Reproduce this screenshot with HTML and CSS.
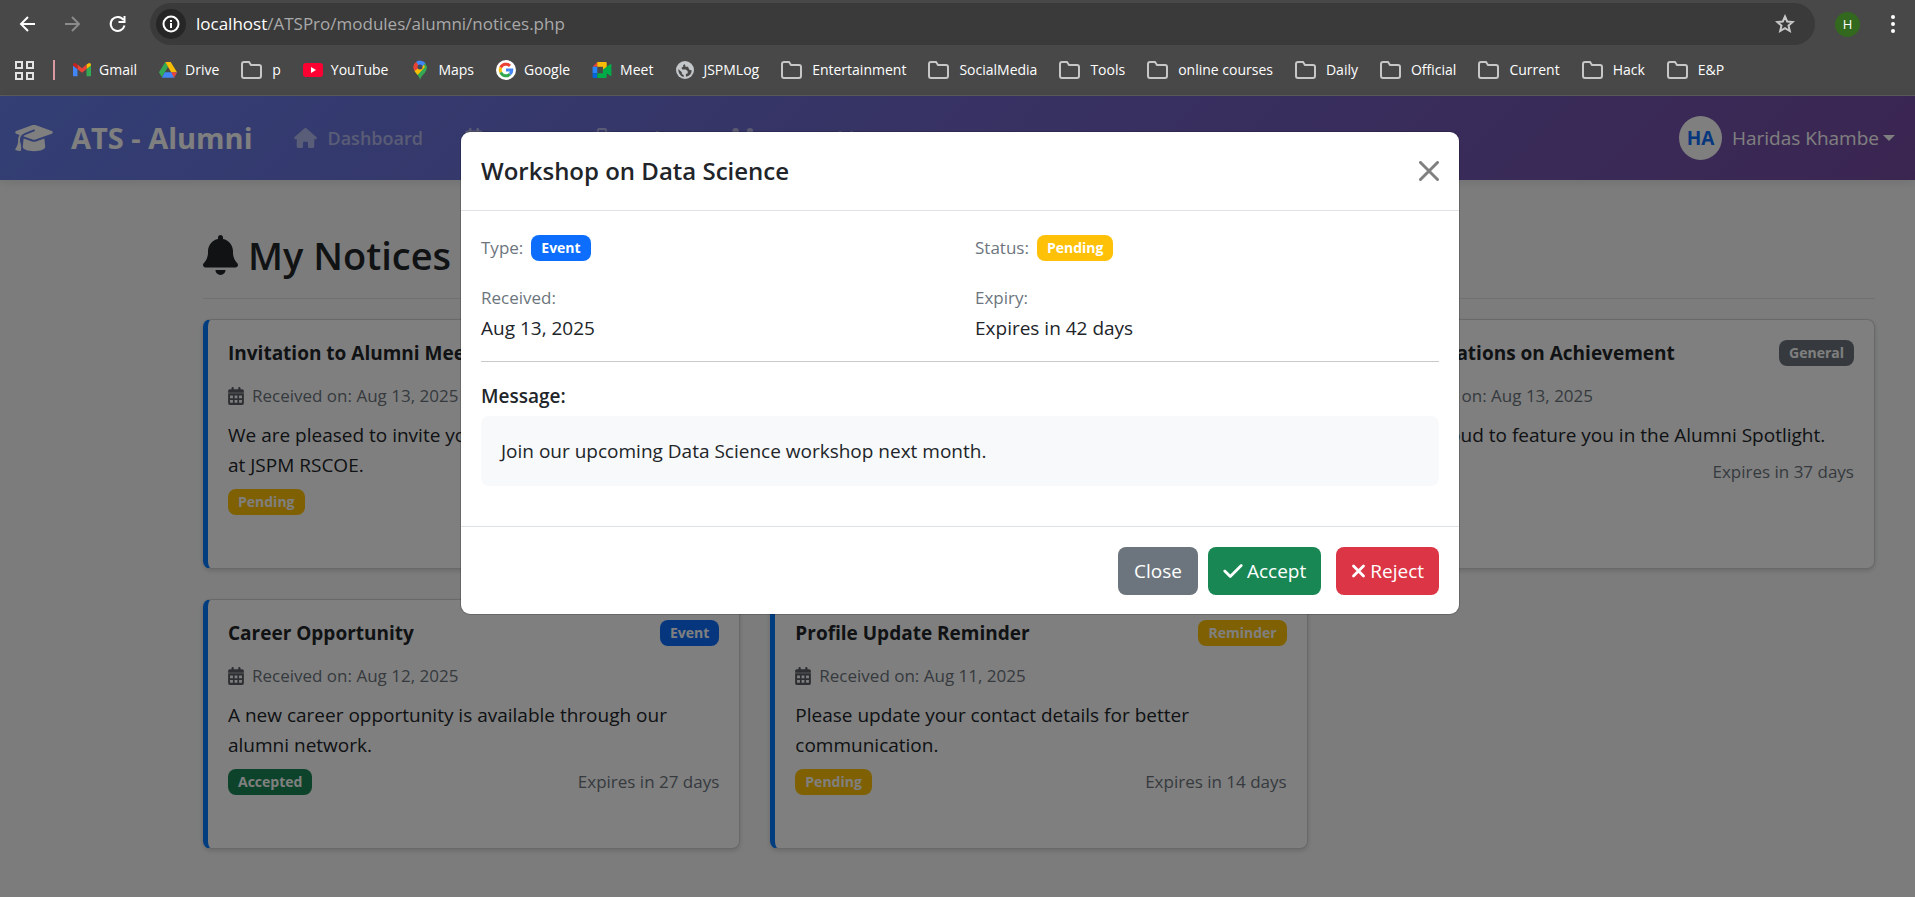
FILE: index.html
```
<!DOCTYPE html>
<html lang="en">
<head>
<meta charset="utf-8">
<title>My Notices</title>
<link rel="stylesheet" href="styles.css">
</head>
<body>
<svg class="defs" aria-hidden="true">
  <symbol id="folder" viewBox="0 0 21 18"><path d="M1 3V15a2 2 0 0 0 2 2h15a2 2 0 0 0 2-2V6a2 2 0 0 0-2-2h-8L8 1H3a2 2 0 0 0-2 2z" fill="none" stroke="#c7c7c7" stroke-width="2"/></symbol>
  <symbol id="calendar" viewBox="0 0 448 512"><path fill="currentColor" fill-rule="evenodd" d="M128 0c17.700 0 32 14.300 32 32V64H288V32c0-17.700 14.300-32 32-32s32 14.300 32 32V64h48c26.500 0 48 21.500 48 48v48H0V112C0 85.500 21.500 64 48 64H96V32c0-17.700 14.300-32 32-32zM0 176H448V464c0 26.500-21.500 48-48 48H48c-26.500 0-48-21.500-48-48V176zM56 240V320H136V240zM184 240V320H264V240zM312 240V320H392V240zM56 368V448H136V368zM184 368V448H264V368zM312 368V448H392V368z"/></symbol>
</svg>

<header class="browser">
  <div class="toolbar">
    <button class="tool" aria-label="Back"><svg width="18" height="18" viewBox="0 0 18 18" fill="none" stroke="#fff" stroke-width="2"><path d="M16 9H2M9 2L2 9l7 7"/></svg></button>
    <button class="tool dim" aria-label="Forward"><svg width="18" height="18" viewBox="0 0 18 18" fill="none" stroke="#8b8b8b" stroke-width="2"><path d="M1 9h14M8 2l7 7-7 7"/></svg></button>
    <button class="tool" aria-label="Reload"><svg width="18" height="18" viewBox="0 0 18 18" fill="none" stroke="#fff" stroke-width="2"><path d="M14.500 5A7 7 0 1 0 15.500 10.500M15.500 1v6h-6"/></svg></button>
    <div class="address">
      <span class="site-info"><svg width="18" height="18" viewBox="0 0 18 18"><circle cx="9" cy="9" r="7.500" fill="none" stroke="#fff" stroke-width="2"/><path d="M8 8h2v5H8zM8 5h2v2H8z" fill="#fff"/></svg></span>
      <span class="url"><b>localhost</b>/ATSPro/modules/alumni/notices.php</span>
      <button class="star" aria-label="Bookmark this page"><svg width="20" height="20" viewBox="0 0 20 20" fill="none" stroke="#c7c7c7" stroke-width="2"><path d="M10 2.500l2.200 5 5.500.5-4.200 3.600 1.300 5.400L10 14.100 5.200 17l1.300-5.400L2.300 8l5.500-.5z"/></svg></button>
    </div>
    <button class="account" aria-label="Account">H</button>
    <button class="more" aria-label="Menu"><svg width="4" height="22" viewBox="0 0 4 22" fill="#fff"><circle cx="2" cy="4" r="2"/><circle cx="2" cy="11" r="2"/><circle cx="2" cy="18" r="2"/></svg></button>
  </div>
  <nav class="bookmarks" aria-label="Bookmarks">
    <button class="apps" aria-label="Apps"><svg width="19" height="19" viewBox="0 0 19 19" fill="none" stroke="#e3e3e3" stroke-width="2"><path d="M1 1h6v6H1zM12 1h6v6h-6zM1 12h6v6H1zM12 12h6v6h-6z"/></svg></button>
    <span class="divider"></span>
    <a href="#"><svg class="mark small" viewBox="0 0 20 16"><path fill="#4285f4" d="M1 15h4V7L0 3v11q0 1 1 1z"/><path fill="#34a853" d="M15 15h4q1 0 1-1V3l-5 4z"/><path fill="#fbbc04" d="M15 2v5l5-4V2.500C20 .5 18-.4 16.500 1z"/><path fill="#ea4335" d="M5 7V2l5 4 5-4v5l-5 4z"/><path fill="#c5221f" d="M0 2.500V3l5 4V2L3.500 1C2-.4 0 .5 0 2.500z"/></svg>Gmail</a>
    <a href="#"><svg class="mark small" viewBox="0 0 20 18"><path fill="#34a853" d="M7 0l3 5.500L3.300 17 0 11.500z"/><path fill="#fbbc04" d="M7 0h6l7 11.500h-6.500z"/><path fill="#4285f4" d="M6.500 11.500H20L16.700 17.500H3.300z"/><path fill="#ea4335" d="M13.500 11.500H20l-3.300 6z"/></svg>Drive</a>
    <a class="dir" href="#"><svg class="mark"><use href="#folder"/></svg>p</a>
    <a href="#"><svg class="mark" viewBox="0 0 20 14"><rect width="20" height="14" rx="3" fill="#ff0033"/><path d="M8 4l5 3-5 3z" fill="#fff"/></svg>YouTube</a>
    <a href="#"><svg class="mark pin" viewBox="0 0 14 20"><path fill="#34a853" d="M7 20c1-5 7-7 7-13L12 3 1 10c2 4 5 5 6 10z"/><path fill="#fbbc04" d="M1.500 11L9 2l3 5-7.500 8z"/><path fill="#4285f4" d="M3 2a7 7 0 0 1 9.500 1L7 9z"/><path fill="#ea4335" d="M3 2L7 7 1.500 11C0 8-.5 5 3 2z"/><circle cx="7" cy="7" r="2.500" fill="#3c4a66"/></svg>Maps</a>
    <a href="#"><svg class="mark google" viewBox="0 0 20 20"><circle cx="10" cy="10" r="10" fill="#fff"/><g fill="none" stroke-width="3"><path stroke="#ea4335" d="M14 5.800A5.800 5.800 0 0 0 4.700 7.600"/><path stroke="#fbbc04" d="M4.700 7.600a5.800 5.800 0 0 0 0 4.800"/><path stroke="#34a853" d="M4.700 12.400A5.800 5.800 0 0 0 14 14.200"/><path stroke="#4285f4" d="M14 14.200A5.800 5.800 0 0 0 15.800 10H10"/></g></svg>Google</a>
    <a href="#"><svg class="mark meet" viewBox="0 0 20 17"><path fill="#ea4335" d="M0 5l5-5v5z"/><path fill="#fbbc04" d="M5 0h9q1 0 1 1v6l-4 3V5H5z"/><path fill="#2684fc" d="M0 5h5v7H0z"/><path fill="#0066da" d="M0 12h5v5H1q-1 0-1-1z"/><path fill="#00ac47" d="M5 12h6V8l8-6q1 0 1 1v11q0 1-1 1l-4-3v4q0 1-1 1H5z"/></svg>Meet</a>
    <a href="#"><svg class="mark" viewBox="0 0 20 20"><circle cx="10" cy="10" r="10" fill="#c4c7c9"/><path fill="#484848" d="M10 3.500l-2 1v2L6 7.500l1 2h4l2 2v2l-2 1v3q6-1 6.500-7l-3-1-1-3h-3z"/><path fill="#484848" d="M2.500 9l4 3.500v2l2 1v2.500Q2.500 16 2.500 9z"/></svg>JSPMLog</a>
    <a class="dir" href="#"><svg class="mark"><use href="#folder"/></svg>Entertainment</a>
    <a class="dir" href="#"><svg class="mark"><use href="#folder"/></svg>SocialMedia</a>
    <a class="dir" href="#"><svg class="mark"><use href="#folder"/></svg>Tools</a>
    <a class="dir" href="#"><svg class="mark"><use href="#folder"/></svg>online courses</a>
    <a class="dir" href="#"><svg class="mark"><use href="#folder"/></svg>Daily</a>
    <a class="dir" href="#"><svg class="mark"><use href="#folder"/></svg>Official</a>
    <a class="dir" href="#"><svg class="mark"><use href="#folder"/></svg>Current</a>
    <a class="dir" href="#"><svg class="mark"><use href="#folder"/></svg>Hack</a>
    <a class="dir" href="#"><svg class="mark"><use href="#folder"/></svg>E&amp;P</a>
  </nav>
</header>

<div class="viewport">
  <nav class="navbar">
    <a class="brand" href="#"><svg width="38" height="30" viewBox="0 0 640 512" fill="currentColor"><path d="M320 32c-8.100 0-16.100 1.400-23.700 4.100L15.800 137.400C6.300 140.900 0 149.900 0 160s6.300 19.100 15.800 22.600l57.900 20.900C57.300 229.300 48 259.800 48 291.900v28.100c0 28.400-10.800 57.700-22.300 80.800c-6.500 13-13.900 25.800-22.500 37.600C0 442.700-.9 448.300 .9 453.400s6 8.900 11.200 10.200l64 16c4.200 1.100 8.700 .3 12.400-2s6.300-6.100 7.100-10.400c8.600-42.800 4.300-81.200-2.100-108.700C90.300 344.300 86 329.800 80 316.500V291.900c0-30.200 10.200-58.700 27.900-81.500c12.900-15.500 29.600-28 49.200-35.700l157-61.700c8.200-3.200 17.500 .8 20.700 9s-.8 17.500-9 20.700l-157 61.700c-12.400 4.900-23.300 12.400-32.200 21.600l159.600 57.600c7.600 2.700 15.600 4.100 23.700 4.100s16.100-1.400 23.700-4.100L624.200 182.600c9.500-3.400 15.800-12.500 15.800-22.600s-6.300-19.100-15.800-22.600L343.700 36.100C336.100 33.400 328.100 32 320 32zM128 408c0 35.300 86 72 192 72s192-36.700 192-72L496.700 262.600 354.500 314c-11.100 4-22.800 6-34.500 6s-23.500-2-34.500-6L143.300 262.600 128 408z"/></svg>ATS - Alumni</a>
    <div class="links">
      <a href="#"><svg width="23" height="20" viewBox="0 0 576 512" fill="currentColor"><path d="M575.800 255.500c0 18-15 32.100-32 32.100h-32l.7 160.200c0 2.700-.2 5.400-.5 8.100V472c0 22.100-17.900 40-40 40H392c-22.100 0-40-17.900-40-40V384c0-17.700-14.300-32-32-32H256c-17.700 0-32 14.300-32 32v88c0 22.100-17.900 40-40 40H104c-22.100 0-40-17.900-40-40V287.600H32c-18 0-32-14-32-32.100c0-9 3-17 10-24L266.400 8c7-7 15-8 22-8s15 2 21 7L564.800 231.500c8 7 12 15 11 24z"/></svg>Dashboard</a>
      <a href="#"><svg width="18" height="20"><use href="#calendar"/></svg>Events</a>
      <a href="#"><svg width="20" height="20" viewBox="0 0 512 512" fill="currentColor"><path fill-rule="evenodd" d="M184 0H328Q384 0 384 56V96H448Q512 96 512 160V448Q512 512 448 512H64Q0 512 0 448V160Q0 96 64 96H128V56Q128 0 184 0zM176 48V96H336V48z"/></svg>Notices</a>
      <a href="#"><svg width="25" height="20" viewBox="0 0 640 512" fill="currentColor"><circle cx="144" cy="80" r="80"/><circle cx="512" cy="80" r="80"/><circle cx="320" cy="224" r="96"/><path d="M0 300q0-108 106-108h60q20 0 40 10-10 90 58 118H22Q0 320 0 300zM376 320q68-28 58-118 20-10 40-10h60q106 0 106 108 0 20-22 20zM128 485q0-133 133-133h118q133 0 133 133 0 27-27 27H155q-27 0-27-27z"/></svg>Mentorship</a>
    </div>
    <button class="user"><span class="avatar">HA</span>Haridas Khambe<span class="caret"></span></button>
  </nav>

  <main class="content">
    <h1><svg width="35" height="40" viewBox="0 0 448 512" fill="currentColor"><path d="M224 0c-17.700 0-32 14.300-32 32V51.200C119 66 64 130.600 64 208v18.800c0 47-17.300 92.400-48.500 127.600l-7.400 8.300c-8.400 9.400-10.400 22.900-5.300 34.400S19.400 416 32 416H416c12.600 0 24-7.400 29.200-18.900s3.100-25-5.300-34.400l-7.400-8.300C401.300 319.200 384 273.900 384 226.800V208c0-77.400-55-142-128-156.800V32c0-17.700-14.300-32-32-32zm45.300 493.300c12-12 18.700-28.300 18.700-45.300H160c0 17 6.700 33.300 18.700 45.300s28.300 18.700 45.300 18.700s33.300-6.700 45.300-18.700z"/></svg>My Notices</h1>
    <div class="grid">
      <article class="card">
        <div class="card-head"><h2>Invitation to Alumni Meet</h2><span class="badge blue">Event</span></div>
        <p class="date"><svg><use href="#calendar"/></svg>Received on: Aug 13, 2025</p>
        <p>We are pleased to invite you to the Alumni Meet<br>at JSPM RSCOE.</p>
        <div class="card-foot"><span class="badge yellow">Pending</span></div>
      </article>
      <article class="card">
        <div class="card-head"><h2>Workshop on Data Science</h2><span class="badge blue">Event</span></div>
        <p class="date"><svg><use href="#calendar"/></svg>Received on: Aug 13, 2025</p>
        <p>Join our upcoming Data Science workshop.</p>
        <div class="card-foot"><span class="badge yellow">Pending</span></div>
      </article>
      <article class="card">
        <div class="card-head"><h2>Congratulations on Achievement</h2><span class="badge gray">General</span></div>
        <p class="date"><svg><use href="#calendar"/></svg>Received on: Aug 13, 2025</p>
        <p>We are proud to feature you in the Alumni Spotlight.</p>
        <div class="card-foot"><span class="expires">Expires in 37 days</span></div>
      </article>
      <article class="card">
        <div class="card-head"><h2>Career Opportunity</h2><span class="badge blue">Event</span></div>
        <p class="date"><svg><use href="#calendar"/></svg>Received on: Aug 12, 2025</p>
        <p>A new career opportunity is available through our<br>alumni network.</p>
        <div class="card-foot"><span class="badge green">Accepted</span><span class="expires">Expires in 27 days</span></div>
      </article>
      <article class="card">
        <div class="card-head"><h2>Profile Update Reminder</h2><span class="badge yellow">Reminder</span></div>
        <p class="date"><svg><use href="#calendar"/></svg>Received on: Aug 11, 2025</p>
        <p>Please update your contact details for better<br>communication.</p>
        <div class="card-foot"><span class="badge yellow">Pending</span><span class="expires">Expires in 14 days</span></div>
      </article>
    </div>
  </main>

  <div class="backdrop">
    <section class="modal" role="dialog" aria-labelledby="modal-title">
      <header class="modal-head">
        <h2 id="modal-title">Workshop on Data Science</h2>
        <button class="close" aria-label="Close"><svg width="20" height="20" viewBox="0 0 20 20" stroke="#808080" stroke-width="3" stroke-linecap="round"><path d="M1.500 1.500l17 17M18.500 1.500l-17 17"/></svg></button>
      </header>
      <div class="modal-body">
        <div class="facts">
          <div class="inline"><small>Type:</small><span class="badge blue">Event</span></div>
          <div class="inline"><small>Status:</small><span class="badge yellow">Pending</span></div>
          <div><small>Received:</small><span>Aug 13, 2025</span></div>
          <div><small>Expiry:</small><span>Expires in 42 days</span></div>
        </div>
        <h3>Message:</h3>
        <p class="message">Join our upcoming Data Science workshop next month.</p>
      </div>
      <footer class="modal-foot">
        <button class="btn gray">Close</button>
        <button class="btn green"><svg width="20" height="22" viewBox="0 0 448 512"><path fill="#fff" d="M438.600 105.400c12.500 12.500 12.500 32.800 0 45.300l-256 256c-12.500 12.500-32.800 12.500-45.300 0l-128-128c-12.500-12.500-12.500-32.800 0-45.300s32.800-12.500 45.300 0L160 338.700 393.400 105.400c12.500-12.500 32.800-12.500 45.300 0z"/></svg>Accept</button>
        <button class="btn red"><svg width="15" height="20" viewBox="0 0 384 512"><path stroke="#fff" stroke-width="72" stroke-linecap="round" d="M64 128l256 256M320 128L64 384"/></svg>Reject</button>
      </footer>
    </section>
  </div>
</div>
</body>
</html>
```
FILE: styles.css
```
* { box-sizing: border-box; }

body {
  margin: 0;
  min-height: 100vh;
  display: flex;
  flex-direction: column;
  font-family: "Open Sans", "Noto Sans", sans-serif;
  font-size: 19px;
  line-height: 30px;
  color: #212529;
  background: #f8f9fa;
}

h1, h2, h3, p { margin: 0; }
button { font: inherit; color: inherit; border: 0; padding: 0; background: none; }
a { color: inherit; text-decoration: none; }
svg { flex: none; }
.defs { position: absolute; width: 0; height: 0; }

/* Browser chrome */
.browser {
  background: #484848;
  border-bottom: 1px solid #5c5c5c;
  color: #fff;
}
.toolbar { display: flex; align-items: center; padding: 3px 20px 0 19px; }
.tool { display: flex; margin-right: 27px; }
.address {
  flex: 1;
  display: flex;
  align-items: center;
  height: 42px;
  padding: 0 20px 0 6px;
  margin: 0 20px 0 -4px;
  border-radius: 21px;
  background: #3a3a3a;
}
.site-info {
  display: grid;
  place-items: center;
  width: 30px;
  height: 30px;
  border-radius: 50%;
  background: #262626;
}
.url { flex: 1; margin-left: 10px; font-size: 17px; color: #a9a9a9; }
.url b { font-weight: 400; color: #fff; }
.star { display: flex; }
.account {
  width: 25px;
  height: 25px;
  border-radius: 50%;
  background: #33691e;
  font-size: 13px;
  line-height: 25px;
}
.more { display: flex; margin-left: 31px; }
.bookmarks {
  display: flex;
  align-items: center;
  height: 50px;
  padding-left: 15px;
  font-size: 14px;
  white-space: nowrap;
}
.bookmarks a { display: flex; align-items: center; gap: 8px; margin-right: 22px; }
.bookmarks .dir { gap: 10px; }
.apps { display: flex; }
.divider { width: 2px; height: 20px; margin: 0 18px 0 19px; background: #d89aa0; }
.mark { width: 20px; height: 18px; }
.dir .mark { width: 21px; }
.small { width: 18px; }
.pin, .google { height: 20px; }
.meet { height: 16px; }

/* Page */
.viewport { position: relative; flex: 1; }
.navbar {
  display: flex;
  align-items: center;
  height: 84px;
  padding: 0 20px 0 15px;
  color: #fff;
  background: linear-gradient(135deg, #667eea, #764ba2);
  box-shadow: 0 2px 10px rgba(0, 0, 0, 0.1);
}
.brand { display: flex; align-items: center; gap: 18px; font-size: 29px; font-weight: 700; }
.links { display: flex; flex: 1; margin-left: 42px; font-weight: 600; font-size: 18px; color: rgba(255, 255, 255, 0.5); }
.links a { display: flex; align-items: center; gap: 10px; margin-right: 42px; }
.user { display: flex; align-items: center; color: #fff; }
.avatar {
  display: grid;
  place-items: center;
  width: 43px;
  height: 44px;
  margin-right: 10px;
  border-radius: 50%;
  background: #fff;
  color: #0d6efd;
  font-weight: 700;
}
.caret { margin-left: 4px; border: 6px solid transparent; border-top-color: #fff; border-bottom: 0; }

.content { padding: 46px 40px 0 203px; }
h1 {
  display: flex;
  align-items: center;
  gap: 10px;
  height: 73px;
  padding-bottom: 14px;
  margin-bottom: 20px;
  border-bottom: 1px solid #dee2e6;
  font-size: 38px;
  font-weight: 600;
}
.grid { display: grid; grid-template-columns: repeat(3, 1fr); gap: 30px; }
.card {
  min-height: 250px;
  padding: 20px;
  border: 1px solid #d3d3d3;
  border-left: 5px solid #007bff;
  border-radius: 8px;
  background: #fff;
  box-shadow: 0 2px 5px rgba(0, 0, 0, 0.15);
}
.card-head { display: flex; justify-content: space-between; align-items: center; height: 25px; }
.card h2 { font-size: 19px; font-weight: 700; white-space: nowrap; }
.card p { white-space: nowrap; }
.card .date { display: flex; align-items: center; gap: 8px; margin: 16px 0 9px; font-size: 17px; color: #6c757d; }
.date svg { width: 16px; height: 18px; color: #5a5f64; }
.card-foot { display: flex; align-items: center; height: 26px; margin-top: 9px; }
.expires { margin-left: auto; font-size: 17px; color: #6c757d; }

.badge {
  display: inline-block;
  padding: 0 10px;
  border-radius: 8px;
  color: #fff;
  font-size: 14px;
  font-weight: 700;
  line-height: 26px;
}
.blue { background: #0d6efd; }
.yellow { background: #ffc107; }
.gray { background: #6c757d; }
.green { background: #198754; }
.red { background: #dc3545; }

/* Dialog */
.backdrop {
  position: absolute;
  inset: 0;
  padding: 35px 0 0 5px;
  background: rgba(0, 0, 0, 0.5);
}
.modal {
  width: 100%;
  max-width: 1000px;
  margin: 0 auto;
  border: 1px solid rgba(0, 0, 0, 0.175);
  border-radius: 10px;
  background: #fff;
  background-clip: padding-box;
}
.modal-head {
  display: flex;
  justify-content: space-between;
  align-items: center;
  height: 79px;
  padding: 0 20px;
  border-bottom: 1px solid #dee2e6;
}
.modal-head h2 { font-size: 24px; font-weight: 600; }
.close { display: flex; }
.modal-body { padding: 20px 20px 40px; }
.facts {
  display: grid;
  grid-template-columns: 1fr 1fr;
  row-gap: 18px;
  column-gap: 30px;
  padding-bottom: 18px;
  margin-bottom: 20px;
  border-bottom: 1px solid #c8c9ca;
}
.facts span, .facts small { display: block; }
.facts small { font-size: 17px; color: #6c757d; }
.inline { display: flex; align-items: center; gap: 8px; height: 34px; }
.modal-body h3 { font-size: 19px; font-weight: 600; line-height: 28px; margin-bottom: 6px; }
.message { padding: 20px; border-radius: 8px; background: #f8f9fa; }
.modal-foot {
  display: flex;
  justify-content: flex-end;
  padding: 20px 20px 19px;
  border-top: 1px solid #dee2e6;
}
.btn {
  display: flex;
  align-items: center;
  gap: 4px;
  height: 48px;
  padding: 0 16px;
  border-radius: 8px;
  color: #fff;
}
.btn.green { margin: 0 15px 0 10px; }
.btn.green, .btn.red { padding: 0 15px; }
```
